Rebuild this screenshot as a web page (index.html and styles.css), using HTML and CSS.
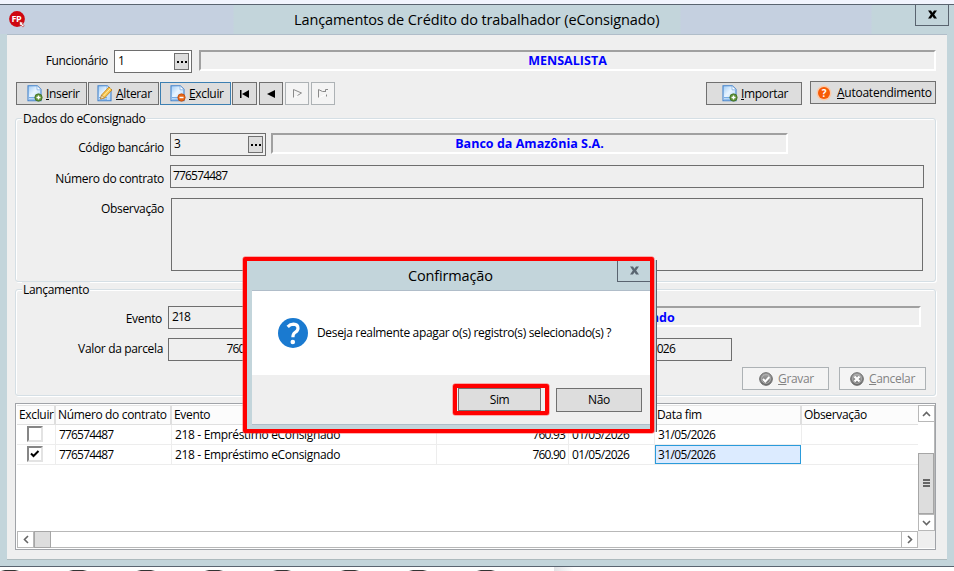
FILE: index.html
```
<!DOCTYPE html>
<html lang="pt-BR">
<head>
<meta charset="utf-8">
<title>Lançamentos de Crédito do trabalhador (eConsignado)</title>
<link rel="stylesheet" href="styles.css">
</head>
<body>
<svg class="defs" width="0" height="0" aria-hidden="true">
  <defs>
    <linearGradient id="sheet" x1="0" y1="0" x2="1" y2="1"><stop offset="0" stop-color="#9fcbf5"/><stop offset=".45" stop-color="#e8f4ff"/><stop offset="1" stop-color="#a8d0f6"/></linearGradient>
    <linearGradient id="metal" x1="0" y1="0" x2="0" y2="1"><stop offset="0" stop-color="#a8a8a8"/><stop offset="1" stop-color="#6c6c6c"/></linearGradient>
    <symbol id="page" viewBox="0 0 16 17"><path d="M1 .8h9.2L14 4.6v11.2H1z" fill="url(#sheet)" stroke="#4382cb" stroke-width="1.1"/><path d="M10 1v3.8h4" fill="#fff" stroke="#7fb0e3" stroke-width=".8"/><path d="M2 12.500h8M2 14.200h8" stroke="#68a4e2" stroke-width=".9"/></symbol>
  </defs>
</svg>
<div class="strip"></div>
<div class="window">
  <header class="titlebar">
    <svg class="app" width="18" height="18" viewBox="0 0 18 18"><circle cx="8" cy="8" r="7.900" fill="#cf0710"/><text x="2.400" y="11.300" class="app-text">FP</text><path d="M10.500 10.500l4 1.200-1.300 1 2 2.200-1.200 1.200-2.100-2.200-1 1.200z" fill="#fff" stroke="#b00" stroke-width=".5"/></svg>
    <h1>Lançamentos de Crédito do trabalhador (eConsignado)</h1>
    <div class="close"><svg width="9" height="9" viewBox="0 0 9 9"><path d="M0 .5h3L4.500 2.700 6 .5h3L6.200 4.500 9 8.500H6L4.500 6.300 3 8.500H0l2.800-4z" fill="#000"/></svg></div>
  </header>
  <main class="client">
    <div class="row employee">
      <label>Funcionário</label>
      <div class="field white lookup"><span>1</span><b class="dots"><i></i><i></i><i></i></b></div>
      <div class="sunken"><span class="nm">MENSALISTA</span></div>
    </div>
    <div class="row toolbar">
      <div class="btn tool"><svg width="16" height="17"><use href="#page"/><circle cx="11.500" cy="12.500" r="3.700" fill="#5d9136" stroke="#3c6b20" stroke-width=".7"/><path d="M9.500 12.500h4M11.500 10.500v4" stroke="#fff" stroke-width="1.400"/></svg><span><u>I</u>nserir</span></div>
      <div class="btn tool edit"><svg width="16" height="17"><use href="#page"/><path d="M3.500 14l1-4L12 2l3 3-7.500 8z" fill="#f7c34a" stroke="#bb7d1b" stroke-width=".8"/><path d="M6 11.500L13.500 3.500" stroke="#fff1ac" stroke-width="1"/><path d="M3.500 14l1-4 3 3z" fill="#f4dfb4" stroke="#a87731" stroke-width=".6"/></svg><span><u>A</u>lterar</span></div>
      <div class="btn tool delete"><svg width="16" height="17"><use href="#page"/><circle cx="11.500" cy="12.500" r="3.700" fill="#e66816" stroke="#bb480b" stroke-width=".7"/><path d="M9.500 12.500h4" stroke="#fff" stroke-width="1.500"/></svg><span><u>E</u>xcluir</span></div>
      <div class="btn nav first"><svg width="11" height="8"><path d="M1 0h1.500v8H1zM10 0v8L3 4z"/></svg></div>
      <div class="btn nav"><svg width="9" height="8"><path d="M8 0v8L0 4z"/></svg></div>
      <div class="btn nav off"><svg width="11" height="9"><path class="hi" d="M2.500 8.500l7-4"/><path d="M1.500.5v8M1.500.5l8 3.500-4 2.500"/></svg></div>
      <div class="btn nav off"><svg width="12" height="9"><path class="hi" d="M2.500 8.500l6-3"/><path d="M1.500.5v8M1.500.5L5.500 2.500h3M8.500 3V.5h2.500M9.500 5.500v2"/></svg></div>
      <div class="btn import"><svg width="16" height="17"><use href="#page"/><circle cx="11.500" cy="12.500" r="3.700" fill="#5d9136" stroke="#3c6b20" stroke-width=".7"/><path d="M9.500 12.500h4M11.500 10.500v4" stroke="#fff" stroke-width="1.400"/></svg><span><u>I</u>mportar</span></div>
      <div class="btn self"><svg width="16" height="16"><circle cx="8" cy="8" r="7.500" fill="#fbc9a8"/><circle cx="8" cy="8" r="6" fill="#f75b05"/><text class="q" x="8" y="11.800" text-anchor="middle">?</text></svg><span><u>A</u>utoatendimento</span></div>
    </div>
    <section class="group loan">
      <h2>Dados do eConsignado</h2>
      <div class="row bank"><label>Código bancário</label><div class="field lookup"><span>3</span><b class="dots"><i></i><i></i><i></i></b></div><div class="sunken"><span>Banco da Amazônia S.A.</span></div></div>
      <div class="row contract"><label>Número do contrato</label><div class="field"><span class="dg">776574487</span></div></div>
      <div class="row note"><label>Observação</label><div class="field"></div></div>
    </section>
    <section class="group entry">
      <h2>Lançamento</h2>
      <div class="row event"><label>Evento</label><div class="field"><span class="dg">218</span></div><div class="sunken"><span>Empréstimo eConsignado</span></div></div>
      <div class="row amount"><label>Valor da parcela</label><div class="field num"><span class="dg">760.90</span></div><div class="field date"><span class="dt">31/05/2026</span></div></div>
      <div class="row actions">
        <div class="btn off"><svg width="14" height="14"><circle cx="7" cy="7" r="6.300" fill="url(#metal)" stroke="#666"/><circle cx="7" cy="7" r="4.400" fill="none" stroke="#bbb" stroke-width=".7"/><path d="M4 7l2.300 2.500L10.300 5" fill="none" stroke="#fff" stroke-width="2"/></svg><span><u>G</u>ravar</span></div>
        <div class="btn off"><svg width="14" height="14"><circle cx="7" cy="7" r="6.300" fill="url(#metal)" stroke="#666"/><circle cx="7" cy="7" r="4.400" fill="none" stroke="#bbb" stroke-width=".7"/><path d="M4.500 4.500l5 5M9.500 4.500l-5 5" stroke="#fff" stroke-width="2.200"/></svg><span><u>C</u>ancelar</span></div>
      </div>
    </section>
    <div class="grid">
      <div class="sheet">
        <div class="tr th"><div>Excluir</div><div>Número do contrato</div><div>Evento</div><div></div><div></div><div>Data fim</div><div>Observação</div></div>
        <div class="tr"><div class="ck"><i></i></div><div class="dg">776574487</div><div>218 - Empréstimo eConsignado</div><div class="r dg">760.93</div><div class="dt">01/05/2026</div><div class="dt">31/05/2026</div><div></div></div>
        <div class="tr"><div class="ck"><i><svg width="11" height="11"><path d="M2 5.500L4.500 8 9.500 3" fill="none" stroke="#000" stroke-width="2"/></svg></i></div><div class="dg">776574487</div><div>218 - Empréstimo eConsignado</div><div class="r dg">760.90</div><div class="dt">01/05/2026</div><div class="sel dt">31/05/2026</div><div></div></div>
      </div>
      <div class="vs"><div class="arrow"><svg width="9" height="6"><path d="M1 5l3.500-3.500L8 5"/></svg></div><div class="thumb"><i></i><i></i><i></i></div><div class="arrow end"><svg width="9" height="6"><path d="M1 1l3.500 3.500L8 1"/></svg></div></div>
      <div class="hs"><div class="arrow"><svg width="6" height="9"><path d="M5 1L1.500 4.500 5 8"/></svg></div><div class="thumb"></div><div class="arrow end"><svg width="6" height="9"><path d="M1 1l3.500 3.500L1 8"/></svg></div></div>
      <div class="corner"></div>
    </div>
  </main>
</div>
<footer class="below"><i></i><i></i><i></i><i></i><i></i><i></i><i></i><i></i></footer>

<div class="dialog">
  <div class="dlg-title"><h1>Confirmação</h1><div class="close"><svg width="9" height="9" viewBox="0 0 9 9"><path d="M0 .5h3L4.500 2.700 6 .5h3L6.200 4.500 9 8.500H6L4.500 6.300 3 8.500H0l2.800-4z" fill="#596570"/></svg></div></div>
  <div class="dlg-body">
    <div class="message"><svg width="30" height="30"><circle cx="15" cy="15" r="15" fill="#1a7ad0"/><path d="M9.700 8.800Q12.200 6.200 15.500 6.200Q20 6.400 20 10.200Q20 12.600 17 14.500Q14.900 15.900 14.900 19.200" fill="none" stroke="#fff" stroke-width="3.200"/><circle cx="14.800" cy="24" r="2.300" fill="#fff"/></svg><span>Deseja realmente apagar o(s) registro(s) selecionado(s) ?</span></div>
    <div class="choices"><div class="mark"><div class="btn">Sim</div></div><div class="btn no">Não</div></div>
  </div>
  <div class="outline"></div>
</div>
</body>
</html>
```

FILE: styles.css
```
* { box-sizing: border-box; }
body { margin: 0; width: 954px; height: 571px; overflow: hidden; position: relative; background: #fff; color: #000; font: 12px/16px "Open Sans", "Noto Sans", sans-serif; letter-spacing: -.34px; }
h1, h2 { margin: 0; font-weight: 400; }
svg { display: block; flex: none; }
.defs { position: absolute; }
.dg { letter-spacing: -.82px; }
.dt { letter-spacing: -.64px; }
.strip { height: 4px; background: #f1f4fd; }
.window { height: 563px; background: #c3d5db; border-top: 1px solid #5a6470; border-bottom: 1px solid #5a6470; padding: 0 7px; }
.titlebar { height: 29px; display: flex; position: relative; margin: 0 -7px; background: linear-gradient(90deg, #c5d0e0 0 233px, #c3d5db 234px 680px, #c5d0e0 681px 871px, #c3d5db 872px); }
.app { margin: 6px 0 0 9px; }
.app-text { font: bold 9px "Open Sans", sans-serif; fill: #fff; letter-spacing: -.3px; }
.titlebar h1 { width: 366px; margin: 4px 0 0 267px; font-size: 14.5px; line-height: 22px; letter-spacing: -.1px; white-space: nowrap; }
.close { width: 34px; height: 22px; border: 1px solid #5a6470; border-top: 0; display: flex; align-items: center; justify-content: center; }
.titlebar .close { margin: -1px 5px 0 auto; }
.client { height: 526px; background: #efefef; border-top: 1px solid #b0bdc9; border-bottom: 1px solid #adbabd; padding: 15px 10px 0 8px; }
.row { display: flex; }
label { text-align: right; white-space: nowrap; flex: none; }
.field { height: 23px; border: 1px solid #6e6e6e; padding: 2px 2px 0 2px; display: flex; justify-content: space-between; line-height: 16px; flex: none; }
.white { background: #fff; }
.lookup { padding-left: 3px; }
.dots { width: 15px; height: 17px; border: 1px solid #707070; background: #ddd; display: flex; align-items: center; justify-content: center; gap: 2px; }
.dots i { width: 2px; height: 2px; background: #000; }
.sunken { height: 21px; border: 2px solid #fff; border-top-color: #a0a0a0; border-left-color: #a0a0a0; color: #00f; font-weight: 700; font-size: 12.5px; letter-spacing: .03px; text-align: center; line-height: 18px; white-space: nowrap; }
.employee label { width: 93px; margin-top: 3px; }
.employee .field { width: 78px; margin-left: 6px; }
.employee .sunken { flex: 1; margin: 0 1px 0 7px; }
.toolbar { margin-top: 9px; padding: 0 1px; }
.btn { height: 23px; border: 1px solid #707070; background: #ddd; display: flex; align-items: center; justify-content: center; line-height: 20px; flex: none; white-space: nowrap; }
.tool { width: 71px; margin-right: 1px; justify-content: flex-start; padding-left: 10px; gap: 3px; }
.edit { padding-left: 8px; }
.delete { border-color: #3c7fb1; padding-left: 9px; }
.nav { width: 24px; margin-right: 2px; }
.nav.first { width: 25px; }
.off { border-color: #adb2b5; background: #f4f4f4; color: #838383; }
.nav.off path { fill: none; stroke: #8a8a8a; }
.nav.off .hi { stroke: #fff; }
.import { width: 96px; margin-left: auto; justify-content: flex-start; padding-left: 15px; gap: 3px; }
.self { width: 126px; margin: -1px 0 0 8px; justify-content: flex-start; padding-left: 5px; gap: 5px; letter-spacing: -.25px; }
.q { font: bold 10px "Open Sans", sans-serif; fill: #fff; }
.group { border: 1px solid #d5dfe5; border-radius: 3px; box-shadow: inset 1px 1px #fff, 1px 1px #fff; margin-right: 1px; }
.group h2 { width: max-content; font-size: inherit; line-height: 16px; margin: -8px 0 0 6px; padding: 0 1px; background: #efefef; position: relative; }
.loan { height: 164px; margin-top: 13px; }
.bank { margin-top: 6px; }
.loan label { width: 148px; margin-right: 6px; }
.bank label { margin-top: 7px; }
.bank .field { width: 96px; }
.bank .sunken { width: 517px; margin-left: 5px; }
.contract { margin-top: 9px; }
.contract label { margin-top: 6px; }
.contract .field { width: 754px; }
.note { margin-top: 10px; }
.note label { margin: 3px 7px 0 0; }
.note .field { width: 752px; height: 73px; }
.entry { height: 107px; margin-top: 7px; }
.event { margin-top: 8px; }
.entry label { width: 146px; margin-right: 6px; }
.event label { margin-top: 5px; }
.event .field { width: 96px; padding-left: 3px; }
.event .sunken { width: 652px; margin-left: 5px; line-height: 19px; }
.amount { margin-top: 9px; }
.amount label { width: 147px; margin: 3px 5px 0 0; }
.num { width: 96px; justify-content: flex-end; padding-right: 4px; }
.date { width: 117px; margin-left: 351px; }
.actions { justify-content: flex-end; gap: 10px; margin-top: 6px; padding-right: 9px; }
.actions .btn { width: 87px; gap: 5px; }
.actions .btn:first-child { padding-left: 2px; }
.grid { height: 147px; margin-top: 7px; margin-right: 1px; border: 1px solid #a0a3a8; background: #fff; padding: 1px; display: grid; grid-template: 126px 17px / 901px 17px; }
.sheet { overflow: hidden; }
.tr { display: grid; grid-template-columns: 39px 116px 265px 132px 86px 147px 116px; height: 20px; border-bottom: 1px solid #ededed; line-height: 19px; white-space: nowrap; }
.tr > div { border-right: 1px solid #ededed; padding-left: 3px; }
.tr > div:nth-child(7) { border-right: 0; }
.th { background: #fcfcfc; border-color: #e0e0e0; border-top: 1px solid #e4e4e4; line-height: 17px; }
.th > div { border-right: 2px solid #dedede; padding-left: 2px; }
.tr .r { text-align: right; padding-right: 3px; }
.tr .ck { padding: 1px 0 0 10px; }
.ck i { display: block; width: 16px; height: 16px; border: 2px solid #e3e3e3; border-top-color: #868686; border-left-color: #868686; background: #fff; }
.tr .sel { background: #dcebff; border: 1px solid #2a9bdb; padding-left: 2px; margin-right: 1px; line-height: 17px; }
.vs { display: flex; flex-direction: column; border-right: 1px solid #b8b8b8; }
.hs { display: flex; border: 1px solid #b8b8b8; }
.arrow { width: 17px; height: 17px; border: 1px solid #b8b8b8; background: #fff; display: flex; align-items: center; justify-content: center; flex: none; }
.arrow path { fill: none; stroke: #666; stroke-width: 1.6; }
.vs .thumb { height: 61px; margin-top: 31px; background: #ddd; border: 1px solid #a6a6a6; display: flex; flex-direction: column; gap: 1px; align-items: center; padding-top: 25px; flex: none; }
.vs .thumb i { width: 7px; height: 2px; background: #666; }
.hs .arrow { height: 15px; border-width: 0 1px 0 0; width: 16px; }
.hs .thumb { width: 17px; margin: -1px 0; background: #ddd; border: 1px solid #a6a6a6; }
.hs .arrow.end { margin-left: auto; border-width: 0 0 0 1px; }
.corner { background: #efefef; }
.below { height: 4px; padding: 3px 0 0 1px; display: flex; gap: 50px; background: linear-gradient(90deg, transparent 554px, #e1e2e5 554px, #fff 574px); }
.below i { width: 18px; height: 1px; background: linear-gradient(90deg, transparent, #333 4px 14px, transparent); flex: none; }
.dialog { position: absolute; left: 244px; top: 260px; width: 413px; height: 172px; padding: 0 8px 7px; background: #c3d5db; border-right: 1px solid #5a6470; }
.dlg-title { height: 30px; display: flex; }
.dlg-title h1 { margin: 5px 0 0 156px; font-size: 14.5px; line-height: 22px; letter-spacing: -.15px; }
.dlg-title .close { margin: 0 -3px 0 auto; height: 22px; }
.dlg-body { width: 398px; height: 135px; border: solid #b0bdc9; border-width: 1px 0; background: #efefef; }
.message { height: 84px; padding-left: 26px; gap: 9px; display: flex; align-items: center; background: #fff; white-space: nowrap; }
.choices { display: flex; padding: 9px 8px 0 0; justify-content: flex-end; gap: 7px; }
.mark { width: 96px; height: 31px; border: 4px solid #f00; border-radius: 2px; padding: 0 4px 0 1px; box-shadow: 0 0 0 .5px #ff6868; }
.mark .btn { height: 23px; }
.no { width: 86px; height: 24px; margin-top: 4px; }
.outline { position: absolute; left: -1px; top: -3px; width: 411px; height: 176px; border: 4px solid #f00; border-radius: 2px; box-shadow: 0 0 0 .5px #ff6868; }
```
